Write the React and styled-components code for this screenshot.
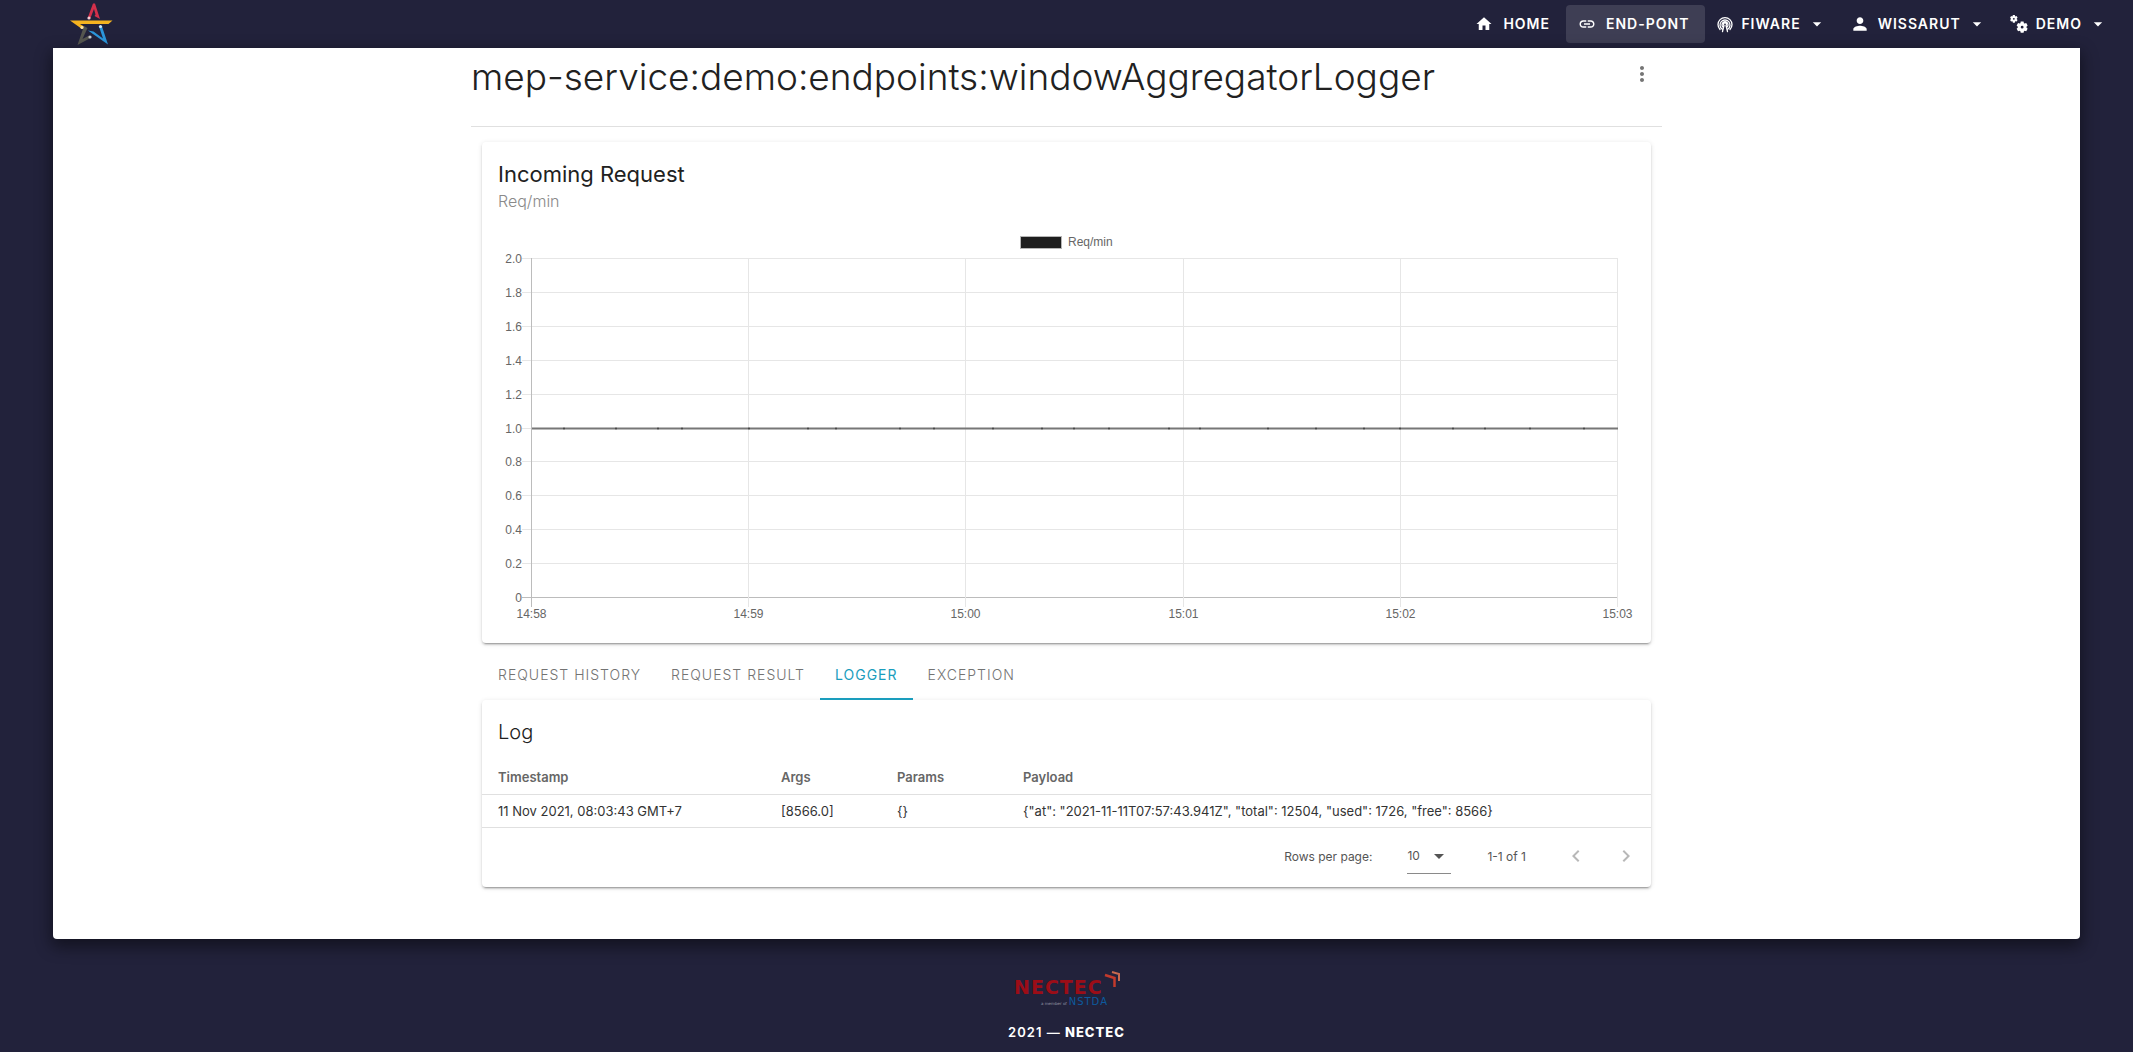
import React, { useState } from "react";
import styled, { createGlobalStyle, css } from "styled-components";
import { MdHome, MdLink, MdPerson, MdMoreVert, MdArrowDropDown, MdChevronLeft, MdChevronRight } from "react-icons/md";

const GlobalStyle = createGlobalStyle`
  *, *::before, *::after { box-sizing: border-box; }
  body { margin: 0; background: #22223b; color: #212121; font-family: Inter, "Open Sans", sans-serif; }
  button, select { font: inherit; color: inherit; }
`;

const Page = styled.div`
  min-height: 100vh;
  display: flex;
  flex-direction: column;
`;

const NavBar = styled.header`
  display: flex;
  align-items: center;
  justify-content: space-between;
  height: 48px;
  padding: 0 14px 0 70px;
`;

const HomeLink = styled.a`
  display: flex;
`;

const NavList = styled.nav`
  display: flex;
  align-items: center;
`;

const navItem = css`
  display: flex;
  align-items: center;
  height: 38px;
  padding: 0 ${(p) => (p.$menu ? 11 : 16)}px 0 12px;
  gap: ${(p) => (p.$menu ? 8 : 10)}px;
  border: 0;
  border-radius: 4px;
  background: ${(p) => (p.$active ? "#3e3e54" : "transparent")};
  color: #fff;
  font-size: 14px;
  font-weight: 600;
  line-height: 20px;
  letter-spacing: 1px;
  text-transform: uppercase;
  text-decoration: none;
  cursor: pointer;
  svg { flex: none; }
`;

const NavLink = styled.a`${navItem}`;
const NavMenu = styled.button`
  ${navItem}
  svg:last-child { margin-left: -2px; }
`;

const Paper = styled.main`
  margin: 0 53px;
  padding: 0 24px 52px;
  background: #fff;
  border-radius: 0 0 4px 4px;
  box-shadow: 0 6px 16px 2px rgba(0, 0, 0, 0.45);
`;

const Container = styled.div`
  max-width: 1191px;
  margin: 0 auto;
`;

const TitleRow = styled.div`
  display: flex;
  align-items: flex-start;
  justify-content: space-between;
  height: 79px;
  padding: 8px 2px 0 0;
  border-bottom: 1px solid #e0e0e0;
`;

const Title = styled.h1`
  margin: 0;
  font-size: 37px;
  font-weight: 300;
  line-height: 42px;
`;

const IconButton = styled.button`
  display: flex;
  align-items: center;
  justify-content: center;
  width: ${(p) => p.$size}px;
  height: ${(p) => p.$size}px;
  padding: 0;
  border: 0;
  border-radius: 50%;
  background: none;
  color: ${(p) => (p.disabled ? "#b8b8b8" : "#757575")};
  cursor: pointer;
`;

const Sections = styled.div`
  padding: 15px 11px 0;
`;

const Card = styled.section`
  background: #fff;
  border-radius: 4px;
  box-shadow: 0 3px 1px -2px rgba(0, 0, 0, 0.2), 0 2px 2px 0 rgba(0, 0, 0, 0.14), 0 1px 5px 0 rgba(0, 0, 0, 0.12);
`;

const CardHead = styled.div`
  padding: 16px 16px 0;
`;

const CardTitle = styled.h2`
  margin: 0;
  font-size: ${(p) => (p.$light ? 20 : 22)}px;
  font-weight: ${(p) => (p.$light ? 300 : 400)};
  line-height: 32px;
`;

const CardSubtitle = styled.p`
  margin: 0;
  color: #8a8a8a;
  font-size: 16px;
  font-weight: 300;
  line-height: 22px;
`;

const ChartBox = styled.div`
  padding: 16px;
`;

const Chart = styled.svg`
  display: block;
  width: 100%;
  font-family: "Liberation Sans", Arial, sans-serif;
  font-size: 12px;
  fill: #666;
`;

const Tabs = styled.div`
  display: flex;
  height: 57px;
  padding: 9px 0 0 1px;
`;

const Tab = styled.button`
  padding: 0 15px 2px;
  border: 0;
  border-bottom: 2px solid ${(p) => (p.$active ? "#1a9dbd" : "transparent")};
  background: none;
  color: ${(p) => (p.$active ? "#1a9dbd" : "#737373")};
  font-size: 14px;
  font-weight: ${(p) => (p.$active ? 400 : 300)};
  letter-spacing: 1px;
  text-transform: uppercase;
  cursor: pointer;
`;

const LogTable = styled.table`
  width: 100%;
  margin-top: 12px;
  border-collapse: collapse;
  table-layout: fixed;
  text-align: left;
`;

const HeadCell = styled.th`
  width: ${(p) => (p.$width ? `${p.$width}px` : "auto")};
  height: 34px;
  padding: 0 16px;
  border-bottom: 1px solid #e0e0e0;
  color: #666;
  font-size: 13px;
  font-weight: 600;
`;

const Cell = styled.td`
  height: 33px;
  padding: 0 16px;
  border-bottom: 1px solid #e0e0e0;
  color: #333;
  font-size: 13px;
  font-weight: 400;
`;

const Pager = styled.div`
  display: flex;
  align-items: center;
  justify-content: flex-end;
  height: 59px;
  padding: 0 13px 2px 0;
  color: #555;
  font-size: 12px;
`;

const PageSize = styled.span`
  display: grid;
  align-items: center;
  width: 44px;
  height: 36px;
  margin: 0 36px 0 35px;
  border-bottom: 1px solid #8a8a8a;
  select, svg { grid-area: 1 / 1; }
  select { appearance: none; width: 44px; height: 32px; padding: 0; border: 0; background: none; }
  svg { justify-self: end; pointer-events: none; }
`;

const PageButtons = styled.div`
  display: flex;
  gap: 26px;
  margin-left: 38px;
`;

const Footer = styled.footer`
  display: flex;
  flex-direction: column;
  align-items: center;
  gap: 13px;
  padding-top: 32px;
  color: #fff;
  font-size: 13px;
  font-weight: 600;
  line-height: 20px;
  letter-spacing: 1px;
  p { margin: 0; }
  strong { font-weight: 800; }
`;

const StarLogo = () => (
  <svg width="44" height="44" viewBox="0 0 44 44" fill="none" aria-hidden="true">
    <path d="M18 15 23 1.500H25L30 17 24.500 14 25.500 12.500 24 7 20.500 16Z" fill="#d3304b" />
    <path d="M0 18.500H42.500L38.500 22H10L14 24.500 12 27Z" fill="#f5b31f" />
    <path d="M14 24 17.500 26 12.500 37 19 33.500 20.500 36 7.500 43Z" fill="#55564f" />
    <path d="M29 24.500H32L38 42.500 18 28.500 23.500 29.500 33 36.500Z" fill="#2b97dc" />
    <circle cx="19" cy="16" r="1.600" fill="#f8cdd4" />
    <circle cx="12" cy="25.500" r="1.600" fill="#fbe3a4" />
    <circle cx="30.500" cy="24.500" r="1.600" fill="#cfe8fa" />
    <circle cx="20" cy="35" r="1.600" fill="#ccc" />
  </svg>
);

const FingerprintIcon = () => (
  <svg width="16" height="17" viewBox="0 0 16 17" fill="none" stroke="#fff" strokeWidth="1.300" strokeLinecap="round" aria-hidden="true">
    <path d="M3 13.500A7 7 0 1 1 13 13.500M5 13A5 5 0 1 1 11 13M5.500 15.500 7 9.500A1.500 1.500 0 1 1 9 9.500L10.500 15.500M6 11A3 3 0 1 1 10 11" />
  </svg>
);

const gearPath =
  "M12 9a3 3 0 1 0 0 6 3 3 0 0 0 0-6ZM9 0h6l.800 3.500 1.500.900L20.700 3.300 23.700 8.500 21.200 11v2l2.500 2.500-3 5.200-3.400-1.100-1.500.900L15 24H9l-.800-3.500-1.500-.900-3.400 1.100-3-5.200L2.800 13v-2L.300 8.500l3-5.200 3.400 1.100 1.500-.900Z";

const GearsIcon = () => (
  <svg width="18" height="18" viewBox="0 0 36 36" fill="#fff" fillRule="evenodd" aria-hidden="true">
    <path transform="scale(.640)" d={gearPath} />
    <path transform="translate(13 13) scale(.940)" d={gearPath} />
  </svg>
);

const NectecLogo = () => (
  <svg width="107" height="38" viewBox="0 0 107 38" aria-label="NECTEC, a member of NSTDA" role="img">
    <g fontFamily="'DejaVu Sans', sans-serif">
      <text x="1" y="23" fontSize="19" fontWeight="700" fill="#9c0d17">NECTEC</text>
      <text x="95" y="34" fontSize="10" fontWeight="400" fill="#0d5a9e" textAnchor="end">NSTDA</text>
      <text x="28" y="34" fontSize="4" fontWeight="400" letterSpacing="0" fill="#9a9aa8">a member of</text>
    </g>
    <path d="M92 4 101.500 7V16" fill="none" stroke="#c23a2c" strokeWidth="2.500" />
    <path d="M99 1 106 3V10" fill="none" stroke="#c8694f" strokeWidth="2" />
  </svg>
);

const X0 = 34;
const X1 = 1120;
const Y0 = 30;
const Y1 = 369;
const MID = 200.5;
const times = ["14:58", "14:59", "15:00", "15:01", "15:02", "15:03"];
const levels = ["2.0", "1.8", "1.6", "1.4", "1.2", "1.0", "0.8", "0.6", "0.4", "0.2", "0"];
const samples = [66, 118, 160, 184, 251, 310, 338, 402, 436, 495, 544, 576, 611, 671, 702, 770, 818, 866, 902, 955, 987, 1032, 1086];

const RequestChart = () => (
  <Chart viewBox="0 0 1137 399" role="img" aria-label="Requests per minute">
    <rect x="522.5" y="8.5" width="41" height="12" fill="#1e1e1e" stroke="#b5b5b5" />
    <text x="570" y="18">Req/min</text>
    {levels.map((label, i) => {
      const y = Math.floor(Y0 + ((Y1 - Y0) * i) / 10 + 0.5) + 0.5;
      return (
        <g key={label}>
          <line x1={X0 - 10} x2={X1} y1={y} y2={y} stroke={i === 10 ? "#bcbcbc" : "#e6e6e6"} />
          <text x={X0 - 10} y={y + 4} textAnchor="end">{label}</text>
        </g>
      );
    })}
    {times.map((label, i) => {
      const x = Math.round(X0 + ((X1 - X0) * i) / 5) - 0.5;
      return (
        <g key={label}>
          <line x1={x} x2={x} y1={Y0} y2={Y1 + 10} stroke={i === 0 ? "#bcbcbc" : "#e6e6e6"} />
          <text x={x} y={Y1 + 21} textAnchor="middle">{label}</text>
        </g>
      );
    })}
    <line x1={X0} x2={X1} y1={MID} y2={MID} stroke="#777" strokeWidth="2" />
    {samples.map((x) => (
      <circle key={x} cx={x} cy={MID} r="1" fill="#444" />
    ))}
  </Chart>
);

const tabNames = ["Request History", "Request Result", "Logger", "Exception"];

export default function App() {
  const [tab, setTab] = useState("Logger");
  return (
    <Page>
      <GlobalStyle />
      <NavBar>
        <HomeLink href="#" aria-label="Start page"><StarLogo /></HomeLink>
        <NavList>
          <NavLink href="#home"><MdHome size={18} />Home</NavLink>
          <NavLink href="#endpoint" $active><MdLink size={18} />End-pont</NavLink>
          <NavMenu $menu><FingerprintIcon />Fiware<MdArrowDropDown size={20} /></NavMenu>
          <NavMenu $menu><MdPerson size={20} />Wissarut<MdArrowDropDown size={20} /></NavMenu>
          <NavMenu $menu><GearsIcon />Demo<MdArrowDropDown size={20} /></NavMenu>
        </NavList>
      </NavBar>
      <Paper>
        <Container>
          <TitleRow>
            <Title>mep-service:demo:endpoints:windowAggregatorLogger</Title>
            <IconButton $size={36} aria-label="More"><MdMoreVert size={24} /></IconButton>
          </TitleRow>
          <Sections>
            <Card>
              <CardHead>
                <CardTitle>Incoming Request</CardTitle>
                <CardSubtitle>Req/min</CardSubtitle>
              </CardHead>
              <ChartBox><RequestChart /></ChartBox>
            </Card>
            <Tabs role="tablist">
              {tabNames.map((name) => (
                <Tab key={name} role="tab" aria-selected={tab === name} $active={tab === name} onClick={() => setTab(name)}>{name}</Tab>
              ))}
            </Tabs>
            <Card>
              <CardHead><CardTitle $light>Log</CardTitle></CardHead>
              <LogTable>
                <thead>
                  <tr>
                    <HeadCell $width={283}>Timestamp</HeadCell>
                    <HeadCell $width={116}>Args</HeadCell>
                    <HeadCell $width={126}>Params</HeadCell>
                    <HeadCell>Payload</HeadCell>
                  </tr>
                </thead>
                <tbody>
                  <tr>
                    <Cell>11 Nov 2021, 08:03:43 GMT+7</Cell>
                    <Cell>[8566.0]</Cell>
                    <Cell>{"{}"}</Cell>
                    <Cell>{'{"at": "2021-11-11T07:57:43.941Z", "total": 12504, "used": 1726, "free": 8566}'}</Cell>
                  </tr>
                </tbody>
              </LogTable>
              <Pager>
                <label htmlFor="page-size">Rows per page:</label>
                <PageSize>
                  <select id="page-size" defaultValue="10">
                    <option>10</option>
                    <option>25</option>
                  </select>
                  <MdArrowDropDown size={24} />
                </PageSize>
                <span>1-1 of 1</span>
                <PageButtons>
                  <IconButton $size={24} disabled aria-label="Previous page"><MdChevronLeft size={24} /></IconButton>
                  <IconButton $size={24} disabled aria-label="Next page"><MdChevronRight size={24} /></IconButton>
                </PageButtons>
              </Pager>
            </Card>
          </Sections>
        </Container>
      </Paper>
      <Footer>
        <NectecLogo />
        <p>2021 — <strong>NECTEC</strong></p>
      </Footer>
    </Page>
  );
}
